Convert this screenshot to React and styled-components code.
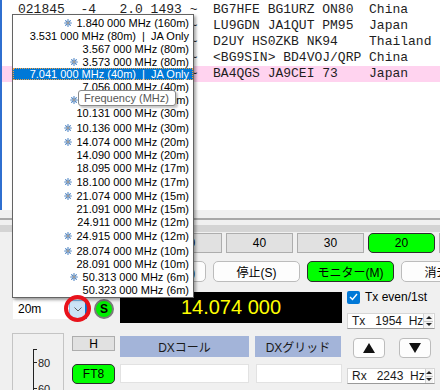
import React from 'react';
import styled, { createGlobalStyle } from 'styled-components';

const GlobalStyle = createGlobalStyle`
  html, body {
    margin: 0;
    padding: 0;
  }
  body {
    width: 440px;
    height: 390px;
    overflow: hidden;
    background: #f0f0f0;
    font-family: "Liberation Sans", "Noto Sans CJK JP", sans-serif;
    font-size: 12px;
    color: #000;
  }
`;

const Window = styled.div`
  position: relative;
  width: 440px;
  height: 390px;
  overflow: hidden;
  background: #f0f0f0;
`;

const DecodePane = styled.div`
  height: 208px;
  padding-top: 2px;
  padding-left: 16px;
  background: #fff;
  border-left: 2px solid #2f6fd0;
  font-family: "Liberation Mono", monospace;
  font-size: 13px;
  color: #1e1e1e;
`;

const DecodeLine = styled.div`
  height: 16px;
  line-height: 16px;
  white-space: pre;
  margin-left: -16px;
  padding-left: 16px;
  background: ${(p) => (p.$highlight ? '#ffd3ef' : 'transparent')};
`;

const Splitter = styled.div`
  height: 23px;
  box-sizing: border-box;
  padding-top: 8px;
`;

const SplitLine = styled.div`
  height: 2px;
  background: #a8a8a8;
  border-bottom: 5px solid #f0f0f0;
  box-shadow: 0 7px 0 #d4d4d4;
`;

const BandRow = styled.div`
  display: flex;
  gap: 4px;
  padding-left: 13px;
  height: 20px;
`;

const BandButton = styled.div`
  flex: 0 0 67px;
  height: 20px;
  box-sizing: border-box;
  display: flex;
  align-items: center;
  justify-content: center;
  background: ${(p) => (p.$active ? '#00ff00' : '#e1e1e1')};
  border: 1px solid ${(p) => (p.$active ? '#2c2c2c' : '#adadad')};
  border-radius: ${(p) => (p.$active ? '5px' : '0')};
  font-size: 12px;
`;

const ControlRow = styled.div`
  display: flex;
  gap: 7px;
  padding-left: 25px;
  margin-top: 8px;
  height: 21px;
`;

const ControlButton = styled.div`
  flex: 0 0 87px;
  height: 21px;
  box-sizing: border-box;
  display: flex;
  align-items: center;
  justify-content: center;
  white-space: nowrap;
  background: ${(p) => (p.$active ? '#00ff00' : '#fdfdfd')};
  border: 1px solid ${(p) => (p.$active ? '#2c2c2c' : '#bcbcbc')};
  border-radius: 5px;
  font-size: 12px;
`;

const Lower = styled.div`
  display: grid;
  grid-template-columns: 103px 222px 88px;
  column-gap: 5px;
  padding-left: 12px;
  margin-top: 8px;
`;

const Column = styled.div`
  display: flex;
  flex-direction: column;
`;

const ComboRow = styled.div`
  display: flex;
  align-items: center;
  height: 20px;
  margin-top: 9px;
`;

const Combo = styled.div`
  display: flex;
  width: 74px;
  height: 19px;
  margin-left: 1px;
  background: #fff;
  font-size: 12px;
`;

const ComboText = styled.div`
  flex: 1;
  padding-left: 5px;
  line-height: 19px;
`;

const ComboDrop = styled.div`
  width: 18px;
  box-sizing: border-box;
  display: flex;
  align-items: center;
  justify-content: center;
  background: #cce4f7;
  border: 1px solid #7ab6e8;
  border-right: 2px solid #0078d7;
`;

const RoundButton = styled.div`
  width: 20px;
  height: 20px;
  margin-left: 7px;
  box-sizing: border-box;
  border-radius: 50%;
  background: #00ee00;
  border: 2px solid #7a7a7a;
  display: flex;
  align-items: center;
  justify-content: center;
  font-weight: bold;
  font-size: 12px;
`;

const MeterRow = styled.div`
  display: flex;
  margin-top: 14px;
`;

const Meter = styled.div`
  width: 52px;
  height: 60px;
  box-sizing: border-box;
  border: 1px solid #c4c4c4;
  border-bottom: none;
  background: #f0f0f0;
`;

const ModeColumn = styled.div`
  display: flex;
  flex-direction: column;
  margin-left: 8px;
  width: 43px;
`;

const SquareButton = styled.div`
  height: 15px;
  margin-top: 3px;
  box-sizing: border-box;
  background: #e1e1e1;
  border: 1px solid #adadad;
  display: flex;
  align-items: center;
  justify-content: center;
  font-size: 12px;
`;

const ModeButton = styled.div`
  height: 20px;
  margin-top: 13px;
  box-sizing: border-box;
  background: #00ff00;
  border: 1px solid #2c2c2c;
  border-radius: 5px;
  display: flex;
  align-items: center;
  justify-content: center;
  font-size: 12px;
`;

const FreqDisplay = styled.div`
  margin-top: 2px;
  height: 31px;
  background: #000;
  color: #ffff00;
  font-size: 20px;
  display: flex;
  align-items: center;
  justify-content: center;
`;

const PairRow = styled.div`
  display: grid;
  grid-template-columns: 129px 86px;
  column-gap: ${(p) => p.$gap}px;
  margin-top: ${(p) => p.$top}px;
  height: ${(p) => p.$height}px;
`;

const DxLabel = styled.div`
  background: #a3b4d9;
  display: flex;
  align-items: center;
  justify-content: center;
  font-size: 12px;
  color: #1a1a1a;
`;

const DxField = styled.div`
  background: #fff;
  border: 1px solid #e2e2e2;
  box-sizing: border-box;
`;

const CheckRow = styled.div`
  display: flex;
  align-items: center;
  gap: 5px;
  height: 14px;
  font-size: 12px;
`;

const CheckBox = styled.div`
  width: 13px;
  height: 13px;
  border-radius: 2px;
  background: #0078d7;
  display: flex;
  align-items: center;
  justify-content: center;
`;

const Spin = styled.div`
  display: flex;
  align-items: center;
  height: ${(p) => p.$height}px;
  margin-top: ${(p) => p.$top}px;
  box-sizing: border-box;
  background: #fff;
  border: 1px solid #d6d6d6;
  border-bottom-color: #9a9a9a;
  font-size: 12px;
`;

const SpinText = styled.div`
  flex: 1;
  padding-left: 4px;
  white-space: pre;
  color: #1a1a1a;
`;

const SpinArrows = styled.div`
  width: 13px;
  height: 100%;
  display: flex;
  flex-direction: column;
  border-left: 1px solid #d0d0d0;
  margin-right: 1px;
`;

const SpinHalf = styled.div`
  flex: 1;
  display: flex;
  align-items: center;
  justify-content: center;
  background: #f3f3f3;
  border-top: ${(p) => (p.$down ? '1px solid #c8c8c8' : 'none')};

  &::after {
    content: '';
    border-left: 3px solid transparent;
    border-right: 3px solid transparent;
    ${(p) => (p.$down ? 'border-top: 3px solid #222;' : 'border-bottom: 3px solid #222;')}
  }
`;

const ArrowRow = styled.div`
  display: flex;
  gap: 14px;
  padding-left: 6px;
  margin-top: 9px;
  height: 20px;
`;

const ArrowButton = styled.div`
  width: 32px;
  box-sizing: border-box;
  background: #fdfdfd;
  border: 1px solid #bcbcbc;
  border-radius: 4px;
  display: flex;
  align-items: center;
  justify-content: center;

  &::after {
    content: '';
    border-left: 6px solid transparent;
    border-right: 6px solid transparent;
    ${(p) => (p.$down ? 'border-top: 10px solid #111;' : 'border-bottom: 10px solid #111;')}
  }
`;

/* overlays */

const DropList = styled.div`
  position: absolute;
  left: 12px;
  top: 14px;
  width: 182px;
  box-sizing: border-box;
  padding-top: 1px;
  padding-bottom: 1px;
  background: #fff;
  border: 1px solid #646464;
  box-shadow: 2px 2px 3px rgba(0, 0, 0, 0.35);
  font-size: 11px;
`;

const DropItem = styled.div`
  height: ${(p) => p.$h}px;
  box-sizing: border-box;
  display: flex;
  align-items: center;
  justify-content: flex-end;
  padding-right: 3px;
  white-space: pre;
  background: ${(p) => (p.$selected ? '#0078d7' : 'transparent')};
  color: ${(p) => (p.$selected ? '#fff' : '#000')};
  border: 1px dotted ${(p) => (p.$selected ? '#f3a040' : 'transparent')};
`;

const StarIcon = styled.svg`
  width: 8px;
  height: 8px;
  margin-right: 5px;
  flex-shrink: 0;
`;

const Tooltip = styled.div`
  position: absolute;
  left: 78px;
  top: 90px;
  width: 98px;
  height: 16px;
  box-sizing: border-box;
  padding-left: 5px;
  line-height: 14px;
  background: #fff;
  border: 1px solid #8a8a8a;
  border-radius: 3px;
  box-shadow: 2px 2px 2px rgba(0, 0, 0, 0.22);
  color: #575757;
  font-size: 11px;
  white-space: nowrap;
`;

const Annotation = styled.div`
  position: absolute;
  left: 64px;
  top: 295px;
  width: 27px;
  height: 27px;
  box-sizing: border-box;
  border: 4px solid #e8131c;
  border-radius: 50%;
`;

const decodes = [
  { time: '021845', snr: '-4', dt: '2.0', freq: '1493', msg: 'BG7HFE BG1URZ ON80', country: 'China' },
  { time: '021845', snr: '-11', dt: '0.3', freq: '1187', msg: 'LU9GDN JA1QUT PM95', country: 'Japan' },
  { time: '021845', snr: '-17', dt: '0.1', freq: '2032', msg: 'D2UY HS0ZKB NK94', country: 'Thailand' },
  { time: '021845', snr: '-9', dt: '0.2', freq: '1650', msg: '<BG9SIN> BD4VOJ/QRP', country: 'China' },
  { time: '021845', snr: '-6', dt: '0.1', freq: '2243', msg: 'BA4QGS JA9CEI 73', country: 'Japan', highlight: true },
];

const formatDecode = (d) =>
  d.time + d.snr.padStart(4) + d.dt.padStart(6) + ' ' + d.freq.padStart(4) + ' ~  ' + d.msg.padEnd(20) + d.country;

const frequencies = [
  { label: '1.840 000 MHz (160m)', star: true, h: 13 },
  { label: '3.531 000 MHz (80m)  |  JA Only', h: 13 },
  { label: '3.567 000 MHz (80m)', h: 13 },
  { label: '3.573 000 MHz (80m)', star: true, h: 13 },
  { label: '7.041 000 MHz (40m)  |  JA Only', selected: true, h: 12 },
  { label: '7.056 000 MHz (40m)', h: 13 },
  { label: '7.074 000 MHz (40m)', star: true, h: 13 },
  { label: '10.131 000 MHz (30m)', h: 14 },
  { label: '10.136 000 MHz (30m)', star: true, h: 15 },
  { label: '14.074 000 MHz (20m)', star: true, h: 14 },
  { label: '14.090 000 MHz (20m)', h: 12 },
  { label: '18.095 000 MHz (17m)', h: 14 },
  { label: '18.100 000 MHz (17m)', star: true, h: 14 },
  { label: '21.074 000 MHz (15m)', star: true, h: 14 },
  { label: '21.091 000 MHz (15m)', h: 12 },
  { label: '24.911 000 MHz (12m)', h: 13 },
  { label: '24.915 000 MHz (12m)', star: true, h: 16 },
  { label: '28.074 000 MHz (10m)', star: true, h: 14 },
  { label: '28.091 000 MHz (10m)', h: 12 },
  { label: '50.313 000 MHz (6m)', star: true, h: 13 },
  { label: '50.323 000 MHz (6m)', h: 13 },
];

const bands = ['160', '80', '60', '40', '30', '20', '17'];
const controls = ['送信許可(N)', 'ログQSO(L)', '停止(S)', 'モニター(M)', '消去(E)'];

const Star = () => (
  <StarIcon viewBox="0 0 8 8">
    <g stroke="#4f86c6" strokeWidth="1.1" strokeLinecap="round">
      <line x1="4" y1="0.6" x2="4" y2="7.4" />
      <line x1="0.6" y1="4" x2="7.4" y2="4" />
      <line x1="1.6" y1="1.6" x2="6.4" y2="6.4" />
      <line x1="6.4" y1="1.6" x2="1.6" y2="6.4" />
    </g>
    <circle cx="4" cy="4" r="1.4" fill="#9a9a9a" />
  </StarIcon>
);

const Chevron = () => (
  <svg width="8" height="5" viewBox="0 0 8 5">
    <polyline points="0.5,0.5 4,4 7.5,0.5" fill="none" stroke="#606060" strokeWidth="1" />
  </svg>
);

const Check = () => (
  <svg width="9" height="8" viewBox="0 0 9 8">
    <polyline points="1,4 3.5,6.5 8,1" fill="none" stroke="#fff" strokeWidth="1.4" />
  </svg>
);

const MeterScale = () => (
  <svg width="50" height="59" viewBox="0 0 50 59">
    <g stroke="#222" strokeWidth="1">
      <line x1="20.5" y1="15" x2="20.5" y2="59" />
      <line x1="20" y1="15.5" x2="24" y2="15.5" />
      <line x1="20" y1="28.5" x2="24" y2="28.5" />
      <line x1="20" y1="54.5" x2="24" y2="54.5" />
    </g>
    <text x="25" y="33" fontSize="11" fontFamily="Liberation Sans, sans-serif" fill="#222">80</text>
    <text x="25" y="59" fontSize="11" fontFamily="Liberation Sans, sans-serif" fill="#222">60</text>
  </svg>
);

const SpinBox = ({ text, height, top }) => (
  <Spin $height={height} $top={top}>
    <SpinText>{text}</SpinText>
    <SpinArrows>
      <SpinHalf />
      <SpinHalf $down />
    </SpinArrows>
  </Spin>
);

const App = () => {
  return (
    <Window>
      <GlobalStyle />
      <DecodePane>
        {decodes.map((d, i) => (
          <DecodeLine key={i} $highlight={d.highlight}>
            {formatDecode(d)}
          </DecodeLine>
        ))}
      </DecodePane>
      <Splitter>
        <SplitLine />
      </Splitter>

      <BandRow>
        {bands.map((b) => (
          <BandButton key={b} $active={b === '20'}>
            {b}
          </BandButton>
        ))}
      </BandRow>

      <ControlRow>
        {controls.map((c) => (
          <ControlButton key={c} $active={c === 'モニター(M)'}>
            {c}
          </ControlButton>
        ))}
      </ControlRow>

      <Lower>
        <Column>
          <ComboRow>
            <Combo>
              <ComboText>20m</ComboText>
              <ComboDrop>
                <Chevron />
              </ComboDrop>
            </Combo>
            <RoundButton>S</RoundButton>
          </ComboRow>
          <MeterRow>
            <Meter>
              <MeterScale />
            </Meter>
            <ModeColumn>
              <SquareButton>H</SquareButton>
              <ModeButton>FT8</ModeButton>
            </ModeColumn>
          </MeterRow>
        </Column>

        <Column>
          <FreqDisplay>14.074 000</FreqDisplay>
          <PairRow $gap={6} $top={13} $height={21}>
            <DxLabel>DXコール</DxLabel>
            <DxLabel>DXグリッド</DxLabel>
          </PairRow>
          <PairRow $gap={7} $top={7} $height={19}>
            <DxField />
            <DxField />
          </PairRow>
        </Column>

        <Column>
          <CheckRow>
            <CheckBox>
              <Check />
            </CheckBox>
            Tx even/1st
          </CheckRow>
          <SpinBox text={'Tx   1954  Hz'} height={16} top={9} />
          <ArrowRow>
            <ArrowButton />
            <ArrowButton $down />
          </ArrowRow>
          <SpinBox text={'Rx   2243  Hz'} height={16} top={10} />
        </Column>
      </Lower>

      <DropList>
        {frequencies.map((f) => (
          <DropItem key={f.label} $h={f.h} $selected={f.selected}>
            {f.star && <Star />}
            {f.label}
          </DropItem>
        ))}
      </DropList>
      <Tooltip>Frequency (MHz)</Tooltip>
      <Annotation />
    </Window>
  );
};

export default App;
